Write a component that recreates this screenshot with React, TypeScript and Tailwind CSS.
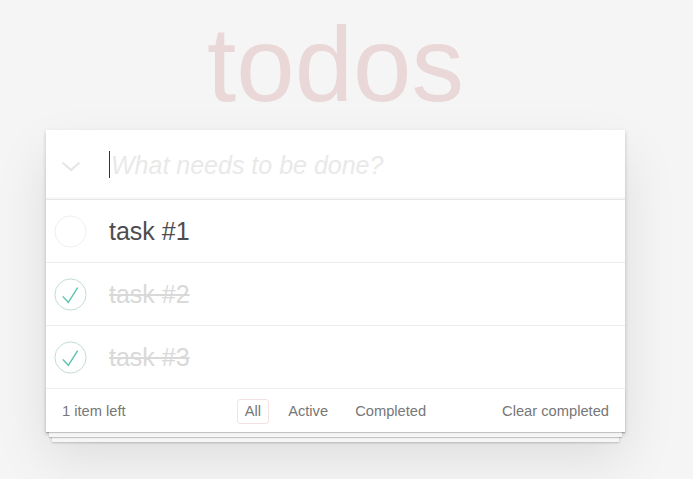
import React from "react";

// Todo data
interface Todo {
  id: number;
  title: string;
  completed: boolean;
}

const todos: Todo[] = [
  { id: 1, title: "task #1", completed: false },
  { id: 2, title: "task #2", completed: true },
  { id: 3, title: "task #3", completed: true },
];

// Round toggle, empty or ticked
function Toggle({ checked }: { checked: boolean }) {
  return (
    <svg width="33" height="33" viewBox="-3 -3 106 106">
      <circle
        cx="50"
        cy="50"
        r="50"
        fill="none"
        stroke={checked ? "#bddad5" : "#ededed"}
        strokeWidth="3"
      />
      {checked && (
        <polyline
          points="25,56 43,75 73,28"
          fill="none"
          stroke="#5dc2af"
          strokeWidth="4.5"
        />
      )}
    </svg>
  );
}

function TodoRow({ todo }: { todo: Todo }) {
  return (
    <li className="flex h-[63px] items-center border-b border-[#ededed]">
      <div className="flex w-[48px] justify-center pl-[1px]">
        <Toggle checked={todo.completed} />
      </div>
      <span
        className={
          todo.completed
            ? "pl-[15px] text-[25px] leading-[30px] text-[#d9d9d9] line-through"
            : "pl-[15px] text-[25px] leading-[30px] text-[#4d4d4d]"
        }
      >
        {todo.title}
      </span>
    </li>
  );
}

export default function App() {
  const left = todos.filter((t) => !t.completed).length;

  return (
    <div className="h-[479px] overflow-hidden bg-[#f5f5f5] font-['Liberation_Sans',Arial,sans-serif]">
      <div className="ml-[46px] w-[579px]">
        <h1 className="mb-[13px] pt-[12px] text-center text-[105px] leading-[105px] font-normal text-[rgba(175,47,47,0.15)]">
          todos
        </h1>

        <section className="relative bg-white shadow-[0_2px_4px_0_rgba(0,0,0,0.2),0_25px_50px_0_rgba(0,0,0,0.1)]">
          <header className="flex h-[69px] items-center shadow-[inset_0_-2px_1px_rgba(0,0,0,0.03)]">
            <div className="flex w-[48px] justify-center pl-[2px] pt-[3px]">
              <svg width="20" height="11" viewBox="0 0 20 11">
                <polyline
                  points="1.5,1.5 10,9 18.5,1.5"
                  fill="none"
                  stroke="#e6e6e6"
                  strokeWidth="2.2"
                />
              </svg>
            </div>
            <div className="flex items-center pl-[15px]">
              <div className="h-[27px] w-[1px] bg-[#333]" />
              <span className="ml-[1px] text-[25px] leading-[30px] italic text-[#e9e9e9]">
                What needs to be done?
              </span>
            </div>
          </header>

          <ul className="border-t border-[#e6e6e6]">
            {todos.map((todo) => (
              <TodoRow key={todo.id} todo={todo} />
            ))}
          </ul>

          <footer className="relative grid h-[43px] grid-cols-[1fr_auto_1fr] items-center px-[16px] text-[14.7px] leading-[17px] text-[#777]">
            <div className="pointer-events-none absolute inset-x-0 bottom-0 h-[43px] shadow-[0_1px_1px_rgba(0,0,0,0.2),0_8px_0_-3px_#f6f6f6,0_9px_1px_-3px_rgba(0,0,0,0.2),0_16px_0_-6px_#f6f6f6,0_17px_2px_-6px_rgba(0,0,0,0.2)]" />
            <span className="pt-[1px]">{left} item left</span>
            <ul className="flex items-center gap-[11px] pt-[1px]">
              <li className="rounded-[3px] border border-[rgba(175,47,47,0.14)] px-[7px] py-[3px]">
                All
              </li>
              <li className="rounded-[3px] border border-transparent px-[7px] py-[3px]">
                Active
              </li>
              <li className="rounded-[3px] border border-transparent px-[7px] py-[3px]">
                Completed
              </li>
            </ul>
            <span className="pt-[1px] text-right">Clear completed</span>
          </footer>
        </section>
      </div>
    </div>
  );
}
